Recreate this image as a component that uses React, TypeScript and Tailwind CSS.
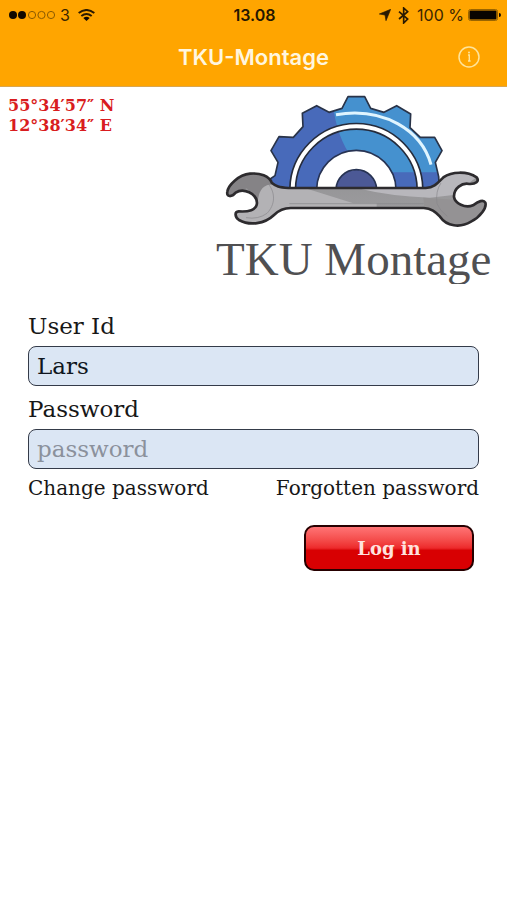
import React from "react";

function StatusBar() {
  return (
    <div className="grid h-[30px] grid-cols-3 items-center pl-2 pr-[6px] text-[16px] leading-5 text-[#3a2500]">
      <div className="flex items-center">
        <svg className="h-3 w-12" viewBox="0 0 48 12" aria-hidden="true">
          <circle cx="5" cy="6" r="4" fill="#120a00" />
          <circle cx="14" cy="6" r="4" fill="#120a00" />
          <g fill="none" stroke="#8a5a00" strokeWidth="1">
            <circle cx="24" cy="6" r="3.6" />
            <circle cx="33.500" cy="6" r="3.6" />
            <circle cx="43" cy="6" r="3.6" />
          </g>
        </svg>
        <span className="ml-1">3</span>
        <svg className="ml-2 h-3 w-[17px]" viewBox="0 0 51 36" aria-hidden="true">
          <g fill="none" stroke="#2a1a00" strokeWidth="6">
            <path d="M2 12 Q25.500 -6 49 12" />
            <path d="M10 21 Q25.500 9 41 21" />
          </g>
          <path d="M16 27 Q25.500 19 35 27 L25.500 36Z" fill="#120a00" />
        </svg>
      </div>
      <div className="text-center font-semibold text-[#241600]">13.08</div>
      <div className="flex items-center justify-end">
        <svg className="h-3 w-3" viewBox="0 0 36 36" aria-hidden="true">
          <path d="M35 1 L1 15 L18 18 L21 35Z" fill="#2a1a00" stroke="#2a1a00" strokeWidth="2" />
        </svg>
        <svg className="ml-[7px] h-[17px] w-[11px]" viewBox="0 0 33 51" aria-hidden="true">
          <path d="M3 14 L29 36 L17 48 V3 L29 14 L3 36" fill="none" stroke="#2a1a00" strokeWidth="5" />
        </svg>
        <span className="ml-2 whitespace-nowrap">100 %</span>
        <svg className="ml-1 h-3 w-[33px]" viewBox="0 0 33 12" aria-hidden="true">
          <rect x="0.500" y="0.500" width="29" height="11" rx="2" fill="none" stroke="#9a6500" />
          <rect x="1.500" y="1.500" width="27" height="9" rx="1" fill="#080400" />
          <path d="M31 4 Q33 4 33 6 Q33 8 31 8Z" fill="#120a00" />
        </svg>
      </div>
    </div>
  );
}

function Logo() {
  return (
    <div className="w-[297px]">
      <svg className="block h-[142px] w-full" viewBox="0 6 891 426" aria-hidden="true">
        <defs>
          <clipPath id="aboveWrench">
            <rect x="0" y="0" width="891" height="312" />
          </clipPath>
          <clipPath id="gearShape">
            <path d="M190 312 L176 285 L195 272 L204 232 L183 197 L207 155 L250 157 L279 125 L277 85 L320 62 L357 82 L396 70 L414 35 L464 35 L482 70 L522 82 L560 62 L602 87 L600 128 L631 157 L674 157 L696 197 L676 232 L686 275 L688 312Z" />
          </clipPath>
          <clipPath id="wrenchShape">
            <path d="M185 293 C178 273 150 263 120 266 C85 270 55 300 52 320 C49 337 65 337 77 323 C100 308 140 325 141 354 C140 376 114 381 86 379 C73 380 74 396 87 405 C119 423 164 417 192 390 C208 374 221 369 242 369 H641 C664 370 676 381 690 395 C710 424 750 430 783 410 C811 396 831 368 826 353 C820 342 806 349 789 361 C765 371 735 355 732 336 C731 310 756 292 778 297 C797 298 809 289 800 277 C772 258 725 259 700 277 C680 297 672 307 647 309 H235 C207 307 198 304 185 293Z" />
          </clipPath>
          <linearGradient id="steel" x1="0" y1="0" x2="0" y2="1">
            <stop offset="0" stopColor="#929294" />
            <stop offset="1" stopColor="#a09fa2" />
          </linearGradient>
        </defs>
        <g clipPath="url(#aboveWrench)">
          <g clipPath="url(#gearShape)">
            <rect x="150" y="20" width="580" height="300" fill="#486aba" />
            <path d="M366 20 Q370 130 416 204 Q485 276 550 262 H720 V20Z" fill="#4591cf" />
          </g>
          <path d="M190 312 L176 285 L195 272 L204 232 L183 197 L207 155 L250 157 L279 125 L277 85 L320 62 L357 82 L396 70 L414 35 L464 35 L482 70 L522 82 L560 62 L602 87 L600 128 L631 157 L674 157 L696 197 L676 232 L686 275 L688 312" fill="none" stroke="#293348" strokeWidth="5" strokeLinejoin="round" />
          <circle cx="439" cy="315" r="191" fill="none" stroke="#252b3b" strokeWidth="22" />
          <circle cx="439" cy="315" r="191" fill="none" stroke="#fff" strokeWidth="12" />
          <circle cx="439" cy="315" r="119" fill="#fff" stroke="#273353" strokeWidth="5" />
          <circle cx="439" cy="315" r="61" fill="#4c5996" stroke="#273353" strokeWidth="5" />
          <path d="M378 89 C522 65 635 137 663 239" fill="none" stroke="#e0f5ff" strokeWidth="9" />
        </g>
        <g clipPath="url(#wrenchShape)">
          <rect x="40" y="255" width="800" height="175" fill="url(#steel)" />
          <path d="M70 400 V367 L143 353 L150 300 L195 300 L284 309 L430 355 H500 V369 H230 L180 430Z" fill="#b3b2b5" />
          <path d="M50 265 H165 L190 296 C160 300 150 310 143 345 L110 310 L45 340Z" fill="#858386" />
          <path d="M440 309 H650 L702 265 H815 L730 330 L660 338 Q540 334 440 309Z" fill="#b8b7bc" />
          <path d="M640 338 L744 345 L830 340 V430 H650Z" fill="#949294" />
        </g>
        <path d="M185 293 C178 273 150 263 120 266 C85 270 55 300 52 320 C49 337 65 337 77 323 C100 308 140 325 141 354 C140 376 114 381 86 379 C73 380 74 396 87 405 C119 423 164 417 192 390 C208 374 221 369 242 369 H641 C664 370 676 381 690 395 C710 424 750 430 783 410 C811 396 831 368 826 353 C820 342 806 349 789 361 C765 371 735 355 732 336 C731 310 756 292 778 297 C797 298 809 289 800 277 C772 258 725 259 700 277 C680 297 672 307 647 309 H235 C207 307 198 304 185 293Z" fill="none" stroke="#2d2b2e" strokeWidth="8" strokeLinejoin="round" />
        <path d="M174 295 C198 325 195 360 171 385 Q145 404 108 398 M693 294 Q676 318 681 356 Q688 376 712 394 M238 356 H641" fill="none" stroke="#88878b" strokeWidth="2" />
      </svg>
      <div className="h-[55px] overflow-hidden whitespace-nowrap pl-[6px] font-['Liberation_Serif',serif] text-[47px] leading-[60px] text-[#505052]">
        TKU Montage
      </div>
    </div>
  );
}

const fieldClass =
  "block h-10 w-full rounded-lg border border-[#343b49] bg-[#dbe6f4] px-2 text-[23px] text-[#101620] outline-none placeholder:text-[#8b919c] placeholder:opacity-100";

export default function App() {
  return (
    <div className="min-h-screen bg-white font-['DejaVu_Serif',serif] text-[#171717]">
      <header className="h-[87px] border-b border-[#d9a650] bg-[#ffa500] font-['Inter',sans-serif]">
        <StatusBar />
        <div className="grid h-[54px] grid-cols-[1fr_auto_1fr] items-center">
          <h1 className="col-start-2 text-[22px] font-semibold leading-7 text-[#fff6df]">TKU-Montage</h1>
          <button type="button" aria-label="Information" className="mr-[26px] justify-self-end">
            <svg className="block h-6 w-6" viewBox="0 0 24 24" aria-hidden="true">
              <circle cx="12" cy="12" r="10" fill="none" stroke="#ffe49a" strokeWidth="1.500" />
              <path d="M11 10 H12.300 V16 M11 16 H13.600" fill="none" stroke="#ffe49a" strokeWidth="1.400" />
              <circle cx="12" cy="7.400" r="1" fill="#ffe49a" />
            </svg>
          </button>
        </div>
      </header>

      <main>
        <section className="flex justify-between">
          <p className="-mr-8 whitespace-nowrap pl-2 pt-[9px] text-[16px] font-bold leading-5 text-[#d91c20]">
            55°34′57″ N
            <br />
            12°38′34″ E
          </p>
          <Logo />
        </section>

        <form className="px-7 pt-[27px] text-[23px]" onSubmit={(event) => event.preventDefault()}>
          <label htmlFor="user" className="block h-[35px] leading-[30px]">User Id</label>
          <input id="user" type="text" defaultValue="Lars" className={fieldClass} />
          <label htmlFor="password" className="mt-2 block h-[35px] leading-[30px]">Password</label>
          <input id="password" type="password" placeholder="password" className={fieldClass} />
          <div className="mt-[7px] flex justify-between text-[20px] leading-6">
            <a href="#change">Change password</a>
            <a href="#forgotten">Forgotten password</a>
          </div>
          <div className="mt-[25px] flex justify-end pr-[5px]">
            <button type="submit" className="h-[46px] w-[170px] rounded-[10px] border-2 border-[#260000] bg-linear-to-b from-[#ff7375] via-[#ed292b] via-50% to-[#d80002] to-55% text-[18px] font-bold text-[#ffe2de]">
              Log in
            </button>
          </div>
        </form>
      </main>
    </div>
  );
}
